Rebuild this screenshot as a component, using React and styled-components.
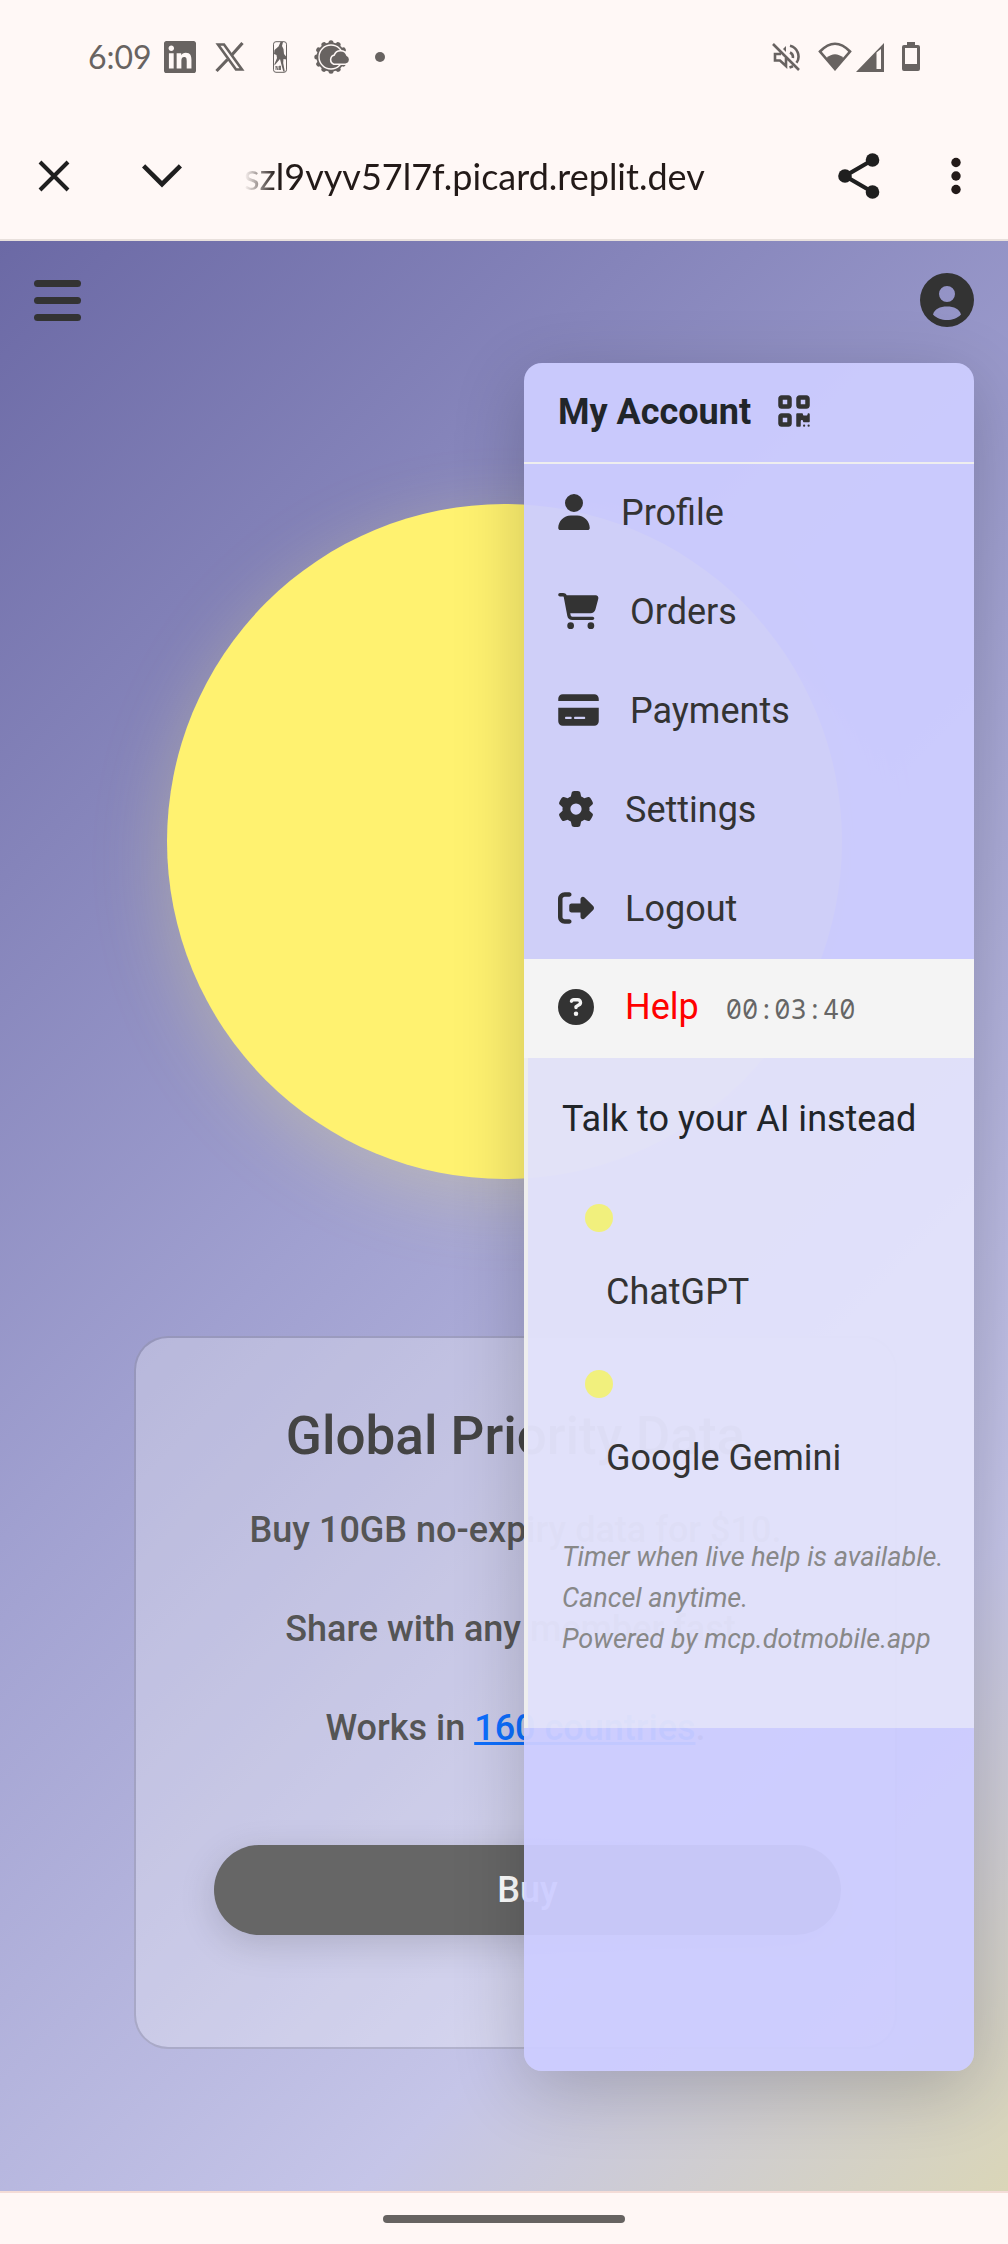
import React from "react";
import styled, { createGlobalStyle } from "styled-components";
import {
  FaUser,
  FaCartShopping,
  FaCreditCard,
  FaGear,
  FaRightFromBracket,
  FaCircleQuestion,
  FaQrcode,
  FaLinkedin,
} from "react-icons/fa6";

const GlobalStyle = createGlobalStyle`
  *, *::before, *::after { box-sizing: border-box; }
  body { margin: 0; font-family: Roboto, "Liberation Sans", sans-serif; font-size: 36px; line-height: 54px; }
  h1, h2, p, ul { margin: 0; padding: 0; }
  ul { list-style: none; }
  button { border: 0; padding: 0; background: none; font: inherit; color: inherit; cursor: pointer; }
  svg { display: block; flex: none; }
`;

const Screen = styled.div`
  min-height: 100vh;
  display: flex;
  flex-direction: column;
  background: #fff8f6;
`;

const StatusBar = styled.div`
  height: 112px;
  padding: 2px 88px 0 88px;
  display: flex;
  align-items: center;
  justify-content: space-between;
  color: #686361;
`;

const StatusGroup = styled.div`
  display: flex;
  align-items: center;
  gap: ${(p) => p.$gap}px;
`;

const Clock = styled.span`
  width: 64px;
  font-family: Lato, sans-serif;
  font-size: 32px;
  line-height: 36px;
  white-space: nowrap;
`;

const AddressBar = styled.div`
  height: 129px;
  padding: 0 26px 0 28px;
  display: flex;
  align-items: center;
  gap: 56px;
  color: #1f1f1f;
  border-bottom: 2px solid #e8e0dc;
`;

const IconButton = styled.button`
  width: 52px;
  height: 52px;
  flex: none;
  display: flex;
  align-items: center;
  justify-content: center;
`;

const Url = styled.span`
  flex: 1;
  min-width: 0;
  overflow: hidden;
  white-space: nowrap;
  font-family: Lato, sans-serif;
  font-size: 36px;
  color: #231a18;
  mask-image: linear-gradient(to right, transparent, #000 32px);
`;

const BarActions = styled.div`
  display: flex;
  gap: 45px;
`;

const Page = styled.div`
  position: relative;
  flex: 1;
  overflow: hidden;
  background: linear-gradient(135deg, #6b69a5 0%, #a0a0d0 44%, #c5c5e8 78%, #dad6b8 100%);
`;

const PageHeader = styled.header`
  padding: 32px 34px;
  display: flex;
  align-items: center;
  justify-content: space-between;
`;

const MenuButton = styled.button`
  width: 47px;
  display: grid;
  gap: 10px;
`;

const Bar = styled.span`
  height: 7px;
  border-radius: 4px;
  background: #333;
`;

const Main = styled.main`
  padding: 145px 0 142px;
`;

const Orb = styled.div`
  width: 67%;
  max-width: 675px;
  aspect-ratio: 1;
  margin: 0 auto 157px;
  border-radius: 50%;
  background: #fff270;
  box-shadow: 0 18px 72px rgba(255, 242, 112, 0.25);
`;

const Card = styled.section`
  margin: 0 111px 0 134px;
  padding: 66px 54px 112px;
  border: 2px solid rgba(128, 128, 128, 0.25);
  border-radius: 34px;
  background: rgba(255, 255, 255, 0.27);
  background-clip: padding-box;
  text-align: center;
  font-weight: 500;
  color: #555;
`;

const CardTitle = styled.h1`
  margin-bottom: 34px;
  font-size: 53px;
  line-height: 65px;
  font-weight: 500;
  color: #444;
`;

const CardText = styled.p`
  margin-bottom: 45px;
`;

const CountryLink = styled.a`
  color: #0d6efd;
`;

const BuyButton = styled.button`
  display: block;
  width: calc(100% - 24px);
  height: 90px;
  margin: 90px 0 0 24px;
  border-radius: 45px;
  background: #666;
  color: #fff;
  font-weight: 500;
  box-shadow: 0 9px 36px rgba(0, 0, 0, 0.15);
`;

const AccountMenu = styled.aside`
  position: absolute;
  top: 122px;
  right: 34px;
  bottom: 120px;
  width: 450px;
  border-radius: 18px;
  background: rgba(204, 204, 255, 0.95);
  box-shadow: 0 18px 72px rgba(0, 0, 0, 0.2);
  color: #333;
`;

const MenuHeader = styled.div`
  height: 101px;
  padding: 0 34px 2px;
  display: flex;
  align-items: center;
  gap: 27px;
  border-bottom: 2px solid #eee;
`;

const MenuTitle = styled.h2`
  font-size: 36px;
  line-height: 54px;
  font-weight: 700;
  color: #212529;
`;

const Item = styled.a`
  height: 99px;
  padding: 0 34px 2px;
  display: flex;
  align-items: center;
  gap: 31px;
  color: ${(p) => (p.$active ? "#f00" : "#333")};
  background: ${(p) => (p.$active ? "#f4f4f4" : "transparent")};
  text-decoration: none;
`;

const ItemIcon = styled.span`
  padding-bottom: 2px;
  color: #333;
  svg { width: ${(p) => p.$width}px; height: 36px; }
`;

const HelpLabel = styled.span`
  display: flex;
  align-items: baseline;
  gap: 27px;
`;

const Timer = styled.span`
  font-family: "Droid Sans Mono", "Noto Sans Mono", "Liberation Mono", monospace;
  font-size: 27px;
  color: #666;
`;

const HelpPanel = styled.div`
  padding: 34px 16px 68px 34px;
  border-left: 4px solid #eee;
  background: rgba(245, 245, 245, 0.5);
  color: #212529;
`;

const Assistants = styled.ul`
  padding: 58px 0 52px 23px;
  display: grid;
  gap: 51px;
`;

const AssistantLink = styled.a`
  display: block;
  color: #333;
  text-decoration: none;
`;

const Marker = styled.span`
  display: block;
  width: 28px;
  height: 28px;
  margin-bottom: 33px;
  border-radius: 50%;
  background: #f1f07d;
`;

const AssistantName = styled.span`
  display: block;
  padding-left: 21px;
`;

const Note = styled.p`
  font-size: 27px;
  line-height: 41px;
  font-style: italic;
  white-space: nowrap;
  color: #888;
`;

const NavBar = styled.footer`
  height: 54px;
  display: flex;
  align-items: center;
  justify-content: center;
  border-top: 2px solid #f4dcd7;
  background: #fff7f5;
`;

const Handle = styled.span`
  width: 242px;
  height: 8px;
  border-radius: 4px;
  background: #676361;
`;

const XLogo = () => (
  <svg width="32" height="32" viewBox="0 0 32 32" fill="none" stroke="currentColor">
    <path d="M4 3.500h6l18 25h-6z" strokeWidth="2.6" />
    <path d="M28.500 2L18 13.800M13.500 18.500L2.500 30" strokeWidth="3.2" />
  </svg>
);

const BasketballIcon = () => (
  <svg width="16" height="32" viewBox="0 0 16 32" fill="currentColor">
    <rect x="1.5" y="0.7" width="13" height="30.6" rx="2.5" fill="none" stroke="currentColor" strokeWidth="1" />
    <path d="M8.500 1h2.500l-1 4 1.500 3 .5 5 2.500 3v2.500l-3-.5-.3 4 1.600 8.500h-1.500L9.500 24 8 18l-3 3.500-2.500 3V23l2.500-6-.500-3-2.500-1 .5-4 4-3.500z" />
    <path d="M4 29v-4l2 4v-4M7.500 29v-4h1v4" fill="none" stroke="currentColor" strokeWidth="0.9" />
  </svg>
);

const GearCloudIcon = () => {
  const teeth = Array.from({ length: 12 }, (_, i) => i * 30);
  return (
    <svg width="35" height="34" viewBox="0 0 35 34">
      <g fill="currentColor">
        <circle cx="17" cy="17" r="14.5" />
        {teeth.map((a) => (
          <circle key={a} cx="17" cy="2.8" r="2.5" transform={`rotate(${a} 17 17)`} />
        ))}
      </g>
      <circle cx="17" cy="17" r="12" fill="none" stroke="#fff8f6" strokeWidth="1.4" />
      <path
        d="M20 23.500a4 4 0 0 1 .8-7.700 6 6 0 0 1 11.500 0 4 4 0 0 1-1 7.700z"
        fill="currentColor"
        stroke="#fff8f6"
        strokeWidth="3"
      />
      <path d="M20 23.500a4 4 0 0 1 .8-7.700 6 6 0 0 1 11.500 0 4 4 0 0 1-1 7.700z" fill="currentColor" />
    </svg>
  );
};

const DotIcon = () => (
  <svg width="10" height="10" viewBox="0 0 10 10"><circle cx="5" cy="5" r="5" fill="currentColor" /></svg>
);

const MuteIcon = () => (
  <svg width="28" height="28" viewBox="0 0 28 28" fill="none" stroke="currentColor" strokeWidth="2.6">
    <path d="M1 1l26 26M9 11H3v6.500h5l6 5.500v-8" />
    <path d="M14 3v6l-3-3z" fill="currentColor" stroke="none" />
    <path d="M18 2.800a11 11 0 0 1 6.500 17M18 9.500a5 5 0 0 1 2.800 5.500M17.500 24.500l3.500-1.300" />
  </svg>
);

const WifiIcon = () => (
  <svg width="34" height="30" viewBox="0 0 34 30">
    <path d="M2 9.500Q17-6 32 9.500L17 27z" fill="none" stroke="currentColor" strokeWidth="2.6" />
    <path d="M8.500 16Q17 8.500 25.500 16L17 28.500z" fill="currentColor" />
  </svg>
);

const SignalIcon = () => (
  <svg width="28" height="29" viewBox="0 0 28 29">
    <path d="M28 0v29H0zM20.500 9.500V26h4.500V6z" fill="currentColor" fillRule="evenodd" />
  </svg>
);

const BatteryIcon = () => (
  <svg width="18" height="30" viewBox="0 0 18 30">
    <path
      d="M5 0h8v3h3a2 2 0 0 1 2 2v22a2 2 0 0 1-2 2H2a2 2 0 0 1-2-2V5a2 2 0 0 1 2-2h3zM3 6v16h12V6z"
      fill="currentColor"
      fillRule="evenodd"
    />
  </svg>
);

const CloseIcon = () => (
  <svg width="32" height="32" viewBox="0 0 32 32" fill="none" stroke="currentColor" strokeWidth="4">
    <path d="M2 2l28 28M30 2L2 30" />
  </svg>
);

const ChevronIcon = () => (
  <svg width="40" height="24" viewBox="0 0 40 24" fill="none" stroke="currentColor" strokeWidth="4.5">
    <path d="M1.600 1.800L20 20.200 38.400 1.800" />
  </svg>
);

const ShareIcon = () => (
  <svg width="42" height="46" viewBox="0 0 42 46" fill="currentColor">
    <path d="M34.500 7L7 23l27.500 16" fill="none" stroke="currentColor" strokeWidth="4.2" />
    <circle cx="34.5" cy="7" r="6.8" />
    <circle cx="7" cy="23" r="6.8" />
    <circle cx="34.5" cy="39" r="6.8" />
  </svg>
);

const MoreIcon = () => (
  <svg width="10" height="38" viewBox="0 0 10 38" fill="#231a18">
    <circle cx="5" cy="5.5" r="4.7" />
    <circle cx="5" cy="19" r="4.7" />
    <circle cx="5" cy="32.5" r="4.7" />
  </svg>
);

const AccountIcon = () => (
  <svg width="54" height="54" viewBox="0 0 54 54" fill="#333">
    <path
      fillRule="evenodd"
      d="M27 0a27 27 0 1 0 0 54 27 27 0 0 0 0-54zm0 13a8 8 0 1 1 0 16 8 8 0 0 1 0-16zm-14 28.500C14.500 36 20 33.500 27 33.500s12.500 2.500 14 8C37 45.500 32.500 47 27 47s-10-1.500-14-5.500z"
    />
  </svg>
);

const items = [
  { label: "Profile", Icon: FaUser, width: 32 },
  { label: "Orders", Icon: FaCartShopping, width: 41 },
  { label: "Payments", Icon: FaCreditCard, width: 41 },
  { label: "Settings", Icon: FaGear, width: 36 },
  { label: "Logout", Icon: FaRightFromBracket, width: 36 },
];

const assistants = ["ChatGPT", "Google Gemini"];

export default function App() {
  return (
    <Screen>
      <GlobalStyle />
      <StatusBar>
        <StatusGroup $gap={26}>
          <StatusGroup $gap={12}>
            <Clock>6:09</Clock>
            <StatusGroup $gap={18}>
              <FaLinkedin viewBox="0 32 448 448" size={32} />
              <XLogo />
            </StatusGroup>
          </StatusGroup>
          <BasketballIcon />
          <GearCloudIcon />
          <DotIcon />
        </StatusGroup>
        <StatusGroup $gap={18}>
          <MuteIcon />
          <StatusGroup $gap={4}>
            <WifiIcon />
            <SignalIcon />
          </StatusGroup>
          <BatteryIcon />
        </StatusGroup>
      </StatusBar>
      <AddressBar>
        <IconButton type="button" aria-label="Close"><CloseIcon /></IconButton>
        <IconButton type="button" aria-label="Minimise"><ChevronIcon /></IconButton>
        <Url>szl9vyv57l7f.picard.replit.dev</Url>
        <BarActions>
          <IconButton type="button" aria-label="Share"><ShareIcon /></IconButton>
          <IconButton type="button" aria-label="More"><MoreIcon /></IconButton>
        </BarActions>
      </AddressBar>
      <Page>
        <PageHeader>
          <MenuButton type="button" aria-label="Menu"><Bar /><Bar /><Bar /></MenuButton>
          <button type="button" aria-label="Account"><AccountIcon /></button>
        </PageHeader>
        <Main>
          <Orb />
          <Card>
            <CardTitle>Global Priority Data</CardTitle>
            <CardText>Buy 10GB no-expiry data for $10.</CardText>
            <CardText>Share with any member fast.</CardText>
            <CardText>Works in <CountryLink href="#countries">160 countries</CountryLink>.</CardText>
            <BuyButton type="button">Buy</BuyButton>
          </Card>
        </Main>
        <AccountMenu>
          <MenuHeader>
            <MenuTitle>My Account</MenuTitle>
            <ItemIcon $width={32}><FaQrcode /></ItemIcon>
          </MenuHeader>
          <nav>
            {items.map(({ label, Icon, width }) => (
              <Item key={label} href={`#${label.toLowerCase()}`}>
                <ItemIcon $width={width}><Icon /></ItemIcon>
                {label}
              </Item>
            ))}
            <Item href="#help" $active>
              <ItemIcon $width={36}><FaCircleQuestion /></ItemIcon>
              <HelpLabel>Help <Timer>00:03:40</Timer></HelpLabel>
            </Item>
          </nav>
          <HelpPanel>
            <p>Talk to your AI instead</p>
            <Assistants>
              {assistants.map((name) => (
                <li key={name}>
                  <AssistantLink href="#assistant">
                    <Marker />
                    <AssistantName>{name}</AssistantName>
                  </AssistantLink>
                </li>
              ))}
            </Assistants>
            <Note>
              Timer when live help is available.<br />
              Cancel anytime.<br />
              Powered by mcp.dotmobile.app
            </Note>
          </HelpPanel>
        </AccountMenu>
      </Page>
      <NavBar><Handle /></NavBar>
    </Screen>
  );
}
